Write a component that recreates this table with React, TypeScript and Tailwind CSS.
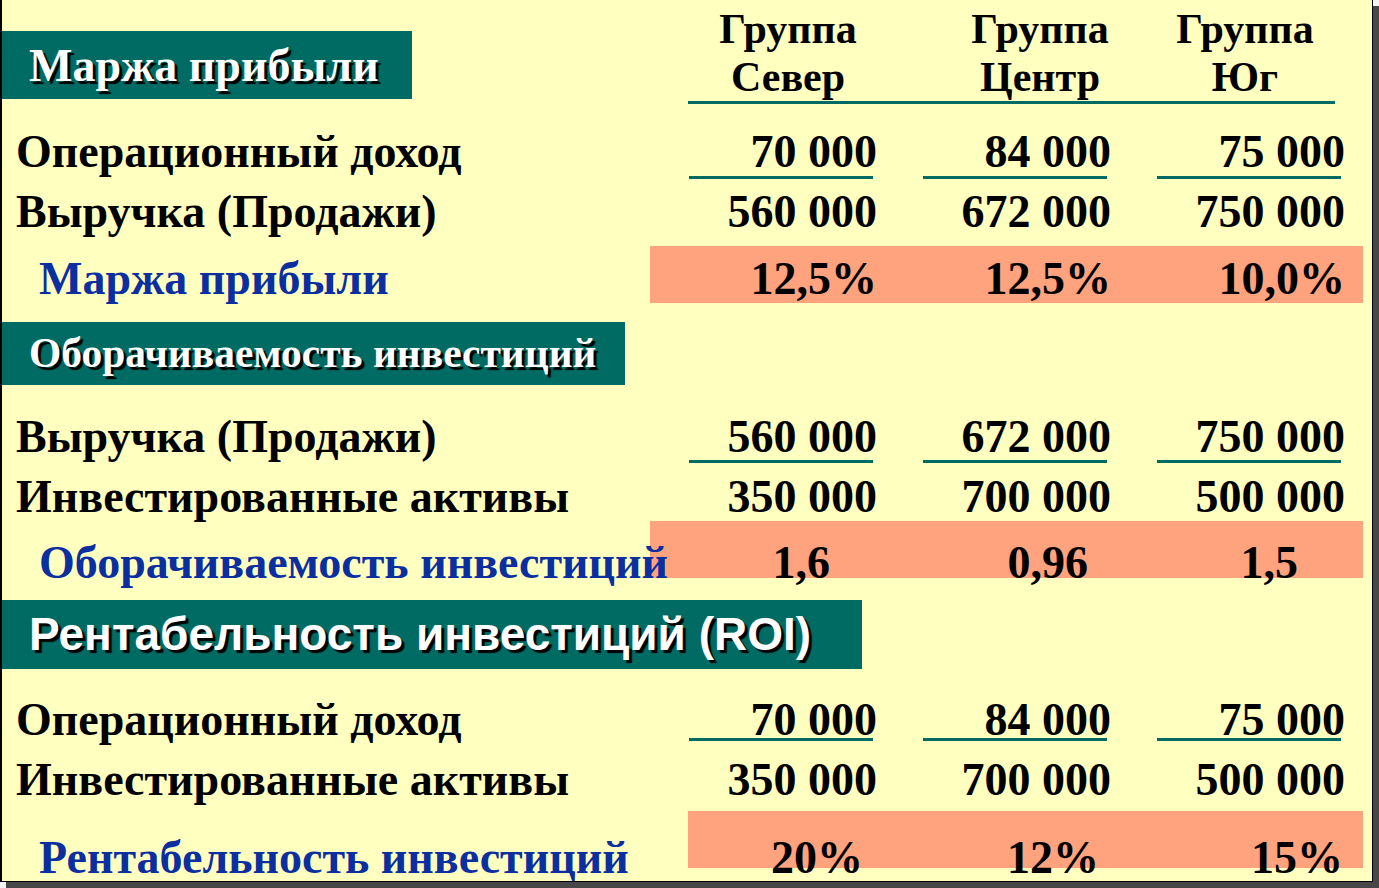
import React from "react";

const TEAL = "bg-[#006b63]";

function Header({ text, w, h, sans, size }: { text: string; w: string; h: string; sans?: boolean; size: string }) {
  return (
    <div className={`${TEAL} ${w} ${h} flex items-center pl-[28px] -ml-[1px]`}>
      <span
        className={`${size} font-bold text-white whitespace-nowrap [text-shadow:3px_3px_1px_#000] ${
          sans ? "font-['Liberation_Sans',Arial,sans-serif]" : "font-['Liberation_Serif',serif]"
        }`}
      >
        {text}
      </span>
    </div>
  );
}

function ValueCell({ v, line, pull }: { v: string; line: boolean; pull: string }) {
  return (
    <div className="w-[234px] flex flex-col">
      <div className="h-[60px] leading-[60px] text-right whitespace-nowrap">{v}</div>
      {line && <div className={`ml-[46px] w-[184px] h-[3px] bg-[#006b63] ${pull}`} />}
    </div>
  );
}

function Row({
  label,
  values,
  line,
  pull = "-mt-[6px]",
  cls,
}: {
  label: string;
  values: string[];
  line?: boolean;
  pull?: string;
  cls: string;
}) {
  return (
    <div className={`flex ${cls}`}>
      <div className="w-[641px] pl-[14px] h-[60px] leading-[60px] whitespace-nowrap">{label}</div>
      {values.map((v, i) => (
        <ValueCell key={i} v={v} line={!!line} pull={pull} />
      ))}
    </div>
  );
}

function Highlight({
  label,
  values,
  labelW,
  widths,
  lead,
  cls,
}: {
  label: string;
  values: string[];
  labelW: string;
  widths: string[];
  lead: string;
  cls: string;
}) {
  return (
    <div className={`flex h-[57px] w-[1361px] ${cls}`}>
      <div
        className={`${labelW} shrink-0 pl-[37px] ${lead} whitespace-nowrap text-[#0c2fa0] relative z-10`}
      >
        {label}
      </div>
      <div className="flex-1 flex bg-[#ffa27e]">
        {values.map((v, i) => (
          <div key={i} className={`${widths[i]} ${lead} text-right whitespace-nowrap`}>
            {v}
          </div>
        ))}
      </div>
    </div>
  );
}

export default function App() {
  return (
    <div className="w-[1379px] h-[888px] bg-[#f4f4f4] overflow-hidden">
      <div className="w-[1373px] h-[882px] bg-[#ffffc0] border-l-[2px] border-r border-b border-black shadow-[6px_6px_0_#474747] font-['Liberation_Serif',serif] font-bold text-black text-[46px] overflow-hidden">
        {/* top block */}
        <div className="flex h-[104px]">
          <div className="mt-[31px]">
            <Header text="Маржа прибыли" w="w-[411px]" h="h-[68px]" size="text-[46px]" />
          </div>
          <div className="ml-[276px] flex flex-col">
            <div className="flex pt-[5px] text-[42px] leading-[48px]">
              <div className="w-[200px] text-center">
                Группа
                <br />
                Север
              </div>
              <div className="ml-[52px] w-[200px] text-center">
                Группа
                <br />
                Центр
              </div>
              <div className="ml-[5px] w-[200px] text-center">
                Группа
                <br />
                Юг
              </div>
            </div>
            <div className="w-[647px] h-[3px] bg-[#006b63]" />
          </div>
        </div>

        <Row cls="mt-[18px]" label="Операционный доход" values={["70 000", "84 000", "75 000"]} line />
        <Row cls="" label="Выручка (Продажи)" values={["560 000", "672 000", "750 000"]} />
        <Highlight
          cls="mt-[4px]"
          label="Маржа прибыли"
          values={["12,5%", "12,5%", "10,0%"]}
          labelW="w-[648px]"
          widths={["w-[227px]", "w-[234px]", "w-[234px]"]}
          lead="leading-[66px]"
        />

        <div className="mt-[19px]">
          <Header text="Оборачиваемость инвестиций" w="w-[624px]" h="h-[63px]" size="text-[41.5px]" />
        </div>
        <Row
          cls="mt-[22px]"
          label="Выручка (Продажи)"
          values={["560 000", "672 000", "750 000"]}
          line
          pull="-mt-[7px]"
        />
        <Row cls="h-[54px]" label="Инвестированные активы" values={["350 000", "700 000", "500 000"]} />
        <Highlight
          cls=""
          label="Оборачиваемость инвестиций"
          values={["1,6", "0,96", "1,5"]}
          labelW="w-[648px]"
          widths={["w-[180px]", "w-[258px]", "w-[210px]"]}
          lead="leading-[84px]"
        />

        <div className="mt-[22px]">
          <Header text="Рентабельность инвестиций (ROI)" w="w-[861px]" h="h-[69px]" size="text-[46px]" sans />
        </div>
        <Row
          cls="mt-[21px]"
          label="Операционный доход"
          values={["70 000", "84 000", "75 000"]}
          line
          pull="-mt-[12px]"
        />
        <Row cls="" label="Инвестированные активы" values={["350 000", "700 000", "500 000"]} />
        <Highlight
          cls="mt-[1px]"
          label="Рентабельность инвестиций"
          values={["20%", "12%", "15%"]}
          labelW="w-[686px]"
          widths={["w-[175px]", "w-[236px]", "w-[244px]"]}
          lead="leading-[94px]"
        />
      </div>
    </div>
  );
}
